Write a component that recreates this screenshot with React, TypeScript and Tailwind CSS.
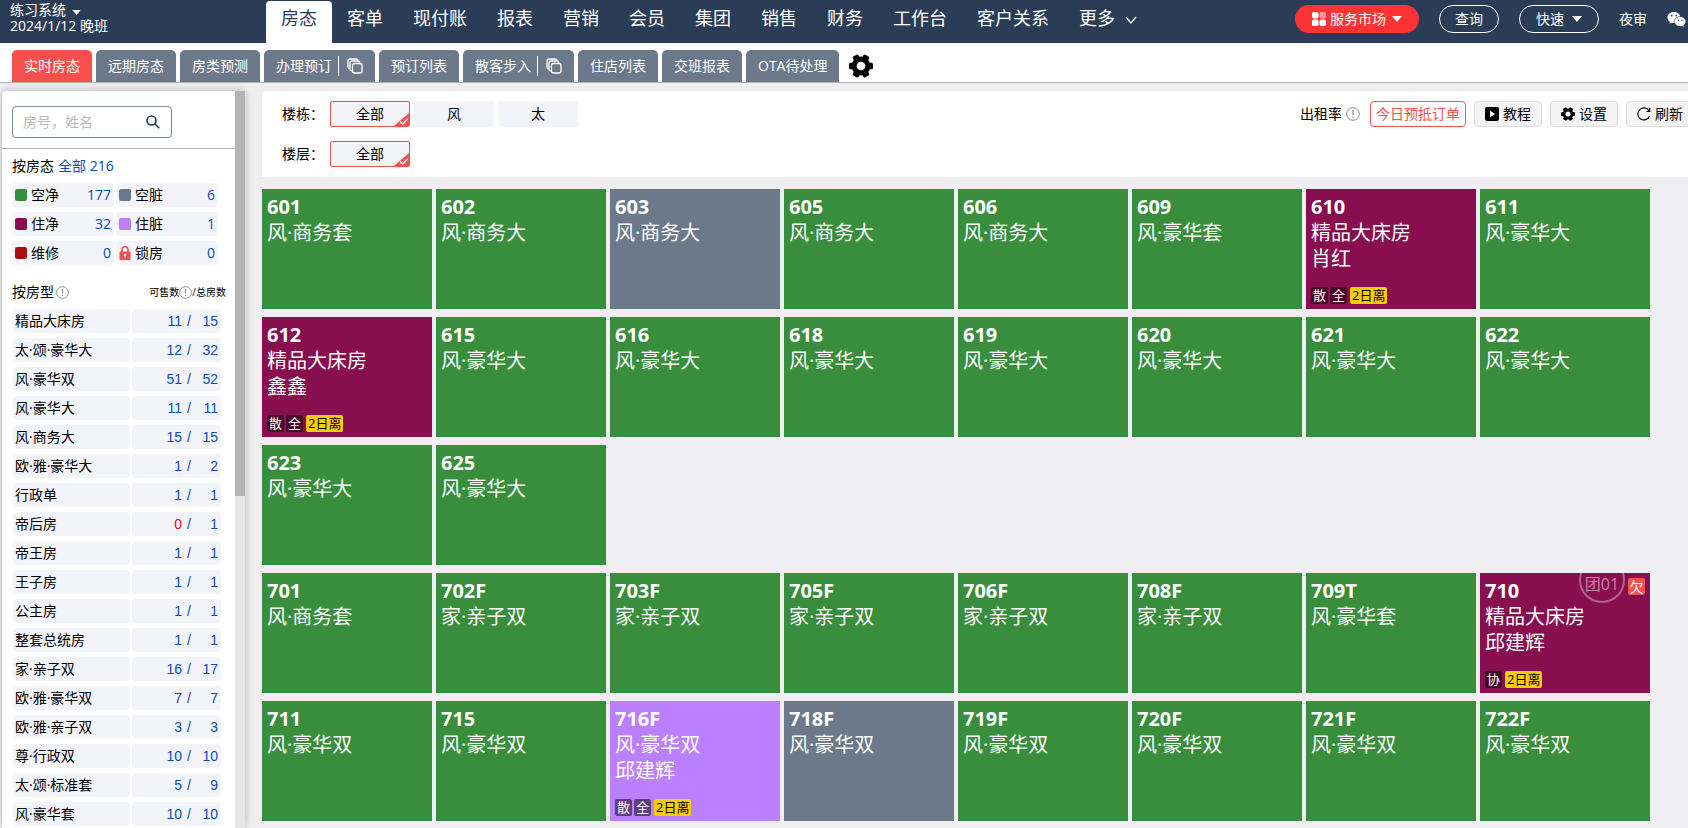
import React from "react";
import { FaWeixin } from "react-icons/fa";

type Status = "clean" | "dirty" | "occupied" | "occupiedDirty";

interface Room {
  no: string;
  type: string;
  status?: Status;
  guest?: string;
  tags?: string[];
  leave?: string;
  group?: string;
  owes?: boolean;
}

const NAV = ["房态", "客单", "现付账", "报表", "营销", "会员", "集团", "销售", "财务", "工作台", "客户关系"];

const TABS: { label: string; copy?: boolean }[] = [
  { label: "实时房态" },
  { label: "远期房态" },
  { label: "房类预测" },
  { label: "办理预订", copy: true },
  { label: "预订列表" },
  { label: "散客步入", copy: true },
  { label: "住店列表" },
  { label: "交班报表" },
  { label: "OTA待处理" },
];

const STATES = [
  { label: "空净", count: 177, color: "bg-[#388e3c]" },
  { label: "空脏", count: 6, color: "bg-[#6c798a]" },
  { label: "住净", count: 32, color: "bg-[#880e4f]" },
  { label: "住脏", count: 1, color: "bg-[#bb80ff]" },
  { label: "维修", count: 0, color: "bg-[#a81010]" },
  { label: "锁房", count: 0, color: "" },
];

const TYPES: [string, number, number][] = [
  ["精品大床房", 11, 15],
  ["太·颂·豪华大", 12, 32],
  ["风·豪华双", 51, 52],
  ["风·豪华大", 11, 11],
  ["风·商务大", 15, 15],
  ["欧·雅·豪华大", 1, 2],
  ["行政单", 1, 1],
  ["帝后房", 0, 1],
  ["帝王房", 1, 1],
  ["王子房", 1, 1],
  ["公主房", 1, 1],
  ["整套总统房", 1, 1],
  ["家·亲子双", 16, 17],
  ["欧·雅·豪华双", 7, 7],
  ["欧·雅·亲子双", 3, 3],
  ["尊·行政双", 10, 10],
  ["太·颂·标准套", 5, 9],
  ["风·豪华套", 10, 10],
];

const FLOORS: Room[][] = [
  [
    { no: "601", type: "风·商务套" },
    { no: "602", type: "风·商务大" },
    { no: "603", type: "风·商务大", status: "dirty" },
    { no: "605", type: "风·商务大" },
    { no: "606", type: "风·商务大" },
    { no: "609", type: "风·豪华套" },
    { no: "610", type: "精品大床房", status: "occupied", guest: "肖红", tags: ["散", "全"], leave: "2日离" },
    { no: "611", type: "风·豪华大" },
    { no: "612", type: "精品大床房", status: "occupied", guest: "鑫鑫", tags: ["散", "全"], leave: "2日离" },
    { no: "615", type: "风·豪华大" },
    { no: "616", type: "风·豪华大" },
    { no: "618", type: "风·豪华大" },
    { no: "619", type: "风·豪华大" },
    { no: "620", type: "风·豪华大" },
    { no: "621", type: "风·豪华大" },
    { no: "622", type: "风·豪华大" },
    { no: "623", type: "风·豪华大" },
    { no: "625", type: "风·豪华大" },
  ],
  [
    { no: "701", type: "风·商务套" },
    { no: "702F", type: "家·亲子双" },
    { no: "703F", type: "家·亲子双" },
    { no: "705F", type: "家·亲子双" },
    { no: "706F", type: "家·亲子双" },
    { no: "708F", type: "家·亲子双" },
    { no: "709T", type: "风·豪华套" },
    { no: "710", type: "精品大床房", status: "occupied", guest: "邱建辉", tags: ["协"], leave: "2日离", group: "团01", owes: true },
    { no: "711", type: "风·豪华双" },
    { no: "715", type: "风·豪华双" },
    { no: "716F", type: "风·豪华双", status: "occupiedDirty", guest: "邱建辉", tags: ["散", "全"], leave: "2日离" },
    { no: "718F", type: "风·豪华双", status: "dirty" },
    { no: "719F", type: "风·豪华双" },
    { no: "720F", type: "风·豪华双" },
    { no: "721F", type: "风·豪华双" },
    { no: "722F", type: "风·豪华双" },
  ],
];

const STATUS_BG: Record<Status, string> = {
  clean: "bg-[#388e3c]",
  dirty: "bg-[#6c798a]",
  occupied: "bg-[#880e4f]",
  occupiedDirty: "bg-[#bb80ff]",
};

function Caret({ className = "" }: { className?: string }) {
  return (
    <svg viewBox="0 0 10 6" className={className} fill="currentColor" aria-hidden="true">
      <path d="M0 0h10L5 6z" />
    </svg>
  );
}

function Gear({ className = "" }: { className?: string }) {
  return (
    <svg viewBox="0 0 22 22" className={className} fill="#000" aria-hidden="true">
      <rect x="8" y="0" width="6" height="22" rx="1.4" transform="rotate(-30 11 11)" />
      <rect x="8" y="0" width="6" height="22" rx="1.4" transform="rotate(30 11 11)" />
      <rect x="8" y="0" width="6" height="22" rx="1.4" transform="rotate(90 11 11)" />
      <circle cx="11" cy="11" r="8.6" />
      <circle cx="11" cy="11" r="4" fill="#fff" />
    </svg>
  );
}

function CopyIcon() {
  return (
    <svg viewBox="0 0 16 16" className="size-4" fill="none" stroke="currentColor" strokeWidth="1.3" aria-hidden="true">
      <path d="M2.5 11A2 2 0 0 1 1 9.200V3a2 2 0 0 1 2-2h6.200A2 2 0 0 1 11 2.500" />
      <path d="M4.700 13A2 2 0 0 1 3 11V5a2 2 0 0 1 2-2h6a2 2 0 0 1 2 1.700" />
      <rect x="5.500" y="5.500" width="9.500" height="9.500" rx="2" />
    </svg>
  );
}

function Info({ className = "" }: { className?: string }) {
  return (
    <svg viewBox="0 0 14 14" className={className} fill="none" stroke="#888" aria-hidden="true">
      <circle cx="7" cy="7" r="6.300" />
      <path d="M7 3v5.200M7 9.500v1.300" strokeWidth="1.200" />
    </svg>
  );
}

function Lock() {
  return (
    <svg viewBox="0 0 12 14" className="h-[14px] w-3" aria-hidden="true">
      <path d="M3 6V3.800a3 3 0 0 1 6 0V6" fill="none" stroke="#f5504e" strokeWidth="1.600" />
      <rect x="0.500" y="5.500" width="11" height="8.500" rx="1" fill="#f5504e" />
      <path d="M6 8v3.500" stroke="#fff" strokeWidth="1.300" />
      <circle cx="6" cy="8.700" r="1.200" fill="#fff" />
    </svg>
  );
}

function Option({ label, selected }: { label: string; selected?: boolean }) {
  return (
    <button
      type="button"
      className={
        "relative h-[26px] w-20 overflow-hidden rounded-xs bg-[#f3f4f9] text-sm text-black " +
        (selected ? "border border-[#f5504e]" : "")
      }
    >
      {label}
      {selected && (
        <svg viewBox="0 0 15 13" className="absolute right-0 bottom-0 h-[13px] w-[15px]" aria-hidden="true">
          <path d="M15 0v13H0z" fill="#f5504e" />
          <path d="M6 8.500l2.700 2.500 5-5" fill="none" stroke="#fff" strokeWidth="1.500" />
        </svg>
      )}
    </button>
  );
}

function ToolButton({ icon, label }: { icon: React.ReactNode; label: string }) {
  return (
    <button
      type="button"
      className="flex h-[26px] w-[68px] shrink-0 items-center justify-center gap-1 rounded-sm border border-[#dcdcdc] bg-[#f3f3f3] text-sm text-black"
    >
      {icon}
      {label}
    </button>
  );
}

function RoomCard({ room }: { room: Room }) {
  return (
    <article className={"relative flex h-[120px] flex-col overflow-hidden p-[5px] pt-1 text-white " + STATUS_BG[room.status ?? "clean"]}>
      <h3 className="text-xl leading-[27px] font-bold">{room.no}</h3>
      <p className="text-xl leading-[26px]">{room.type}</p>
      {room.guest && <p className="text-xl leading-[26px]">{room.guest}</p>}
      {room.tags && (
        <div className="mt-auto flex gap-[2px] text-[13px] leading-[17px]">
          {room.tags.map((t) => (
            <span key={t} className="size-[17px] rounded-xs bg-black/50 text-center">
              {t}
            </span>
          ))}
          <span className="ml-px rounded-xs bg-[#ffcc00] px-[2px] text-black">{room.leave}</span>
        </div>
      )}
      {room.group && (
        <>
          <span className="absolute -top-4 right-[25px] size-[46px] rounded-full border-2 border-white/35" />
          <span className="absolute top-0 right-[25px] w-[46px] text-center text-base leading-[22px] text-white/50">{room.group}</span>
        </>
      )}
      {room.owes && (
        <span className="absolute top-[5px] right-[5px] size-[17px] rounded-xs bg-[#f5504e] text-center text-sm leading-[17px]">欠</span>
      )}
    </article>
  );
}

export default function App() {
  return (
    <div className="flex h-screen flex-col overflow-hidden bg-[#efeff1] font-['Open_Sans','Noto_Sans_CJK_SC',sans-serif] text-sm text-black">
      <header className="flex h-[43px] shrink-0 bg-[#2b3d56] text-white">
        <div className="w-[266px] shrink-0 pt-[2px] pl-[10px] text-sm leading-4">
          <button type="button" className="flex items-center gap-[6px]">
            练习系统
            <Caret className="mt-1 h-[5px] w-[9px]" />
          </button>
          <p>2024/1/12 晚班</p>
        </div>
        <nav className="flex shrink-0 pt-px text-lg">
          {NAV.map((n, i) => (
            <a
              key={n}
              href={"#nav-" + i}
              className={"flex items-center px-[15px] pb-2 " + (i === 0 ? "rounded-t-sm bg-white text-[#2b3d56]" : "")}
            >
              {n}
            </a>
          ))}
          <button type="button" className="flex items-center gap-[10px] px-[15px] pb-2">
            更多
            <svg viewBox="0 0 12 8" className="mt-1 h-2 w-3" fill="none" stroke="currentColor" strokeWidth="1.200" aria-hidden="true">
              <path d="M1 1l5 6 5-6" />
            </svg>
          </button>
        </nav>
        <div className="mr-[2px] ml-auto flex shrink-0 items-start gap-5 pt-[5px]">
          <button type="button" className="flex h-7 w-[124px] items-center justify-center gap-1 rounded-full bg-[#ff3333]">
            <svg viewBox="0 0 14 14" className="size-[14px]" fill="#fff" aria-hidden="true">
              <rect width="6.500" height="6.500" rx="1.800" />
              <rect x="7.500" width="6.500" height="6.500" rx="1.800" opacity="0.5" />
              <rect y="7.500" width="6.500" height="6.500" rx="1.800" />
              <rect x="7.500" y="7.500" width="6.500" height="6.500" rx="1.800" />
            </svg>
            服务市场
            <Caret className="ml-[2px] h-[6px] w-[10px]" />
          </button>
          <button type="button" className="h-7 w-[60px] rounded-full border border-white">查询</button>
          <button type="button" className="flex h-7 w-20 items-center justify-center gap-2 rounded-full border border-white">
            快速
            <Caret className="h-[6px] w-[10px]" />
          </button>
          <button type="button" className="h-7">夜审</button>
          <button type="button" aria-label="微信" className="flex h-7 items-center">
            <FaWeixin className="size-[19px]" />
          </button>
        </div>
      </header>

      <nav className="flex h-10 shrink-0 items-end gap-1 border-b border-[#b4b4b4] bg-white pl-3 text-white">
        {TABS.map((t, i) => (
          <div key={t.label} className={"flex h-8 shrink-0 items-center rounded-t-[5px] px-3 " + (i === 0 ? "bg-[#f5504e]" : "bg-[#6c798a]")}>
            <a href={"#tab-" + i}>{t.label}</a>
            {t.copy && (
              <button type="button" aria-label={t.label + "新窗口"} className="ml-[6px] flex h-5 items-center border-l border-white pl-2">
                <CopyIcon />
              </button>
            )}
          </div>
        ))}
        <button type="button" aria-label="设置菜单" className="ml-[6px] flex h-8 items-center">
          <Gear className="size-6" />
        </button>
      </nav>

      <div className="flex min-h-0 flex-1 pt-2">
        <aside className="ml-[2px] flex w-[243px] shrink-0 rounded-tl-sm bg-white shadow-[0_0_8px_rgba(0,0,0,0.25)]">
          <div className="min-w-0 flex-1 overflow-hidden">
            <div className="border-b border-[#b4b4b4] px-[10px] pt-[15px] pb-[10px]">
              <label className="flex h-8 w-[160px] items-center rounded-sm border border-[#73879d] pr-[11px] pl-[10px]">
                <input type="text" aria-label="房号，姓名" placeholder="房号，姓名" className="min-w-0 flex-1 text-sm outline-none placeholder:text-[#b9b9b9]" />
                <svg viewBox="0 0 14 14" className="size-[14px]" fill="none" stroke="#1f3b5c" strokeWidth="1.600" aria-hidden="true">
                  <circle cx="5.500" cy="5.500" r="4.500" />
                  <path d="M8.800 8.800L13.300 13.300" />
                </svg>
              </label>
            </div>
            <div className="flex h-[34px] items-center gap-1 pl-[10px]">
              <h2>按房态</h2>
              <a href="#all" className="text-[#0b4bc0]">全部 216</a>
            </div>
            <ul className="grid w-[216px] grid-cols-2 gap-x-[2px] gap-y-[5px] pl-[10px]">
              {STATES.map((s) => (
                <li key={s.label} className="flex h-6 items-center gap-1 rounded-sm bg-[#f3f4f9] px-[3px]">
                  {s.color ? <span className={"size-3 rounded-xs " + s.color} /> : <Lock />}
                  <span>{s.label}</span>
                  <span className="ml-auto text-[#0b4bc0]">{s.count}</span>
                </li>
              ))}
            </ul>
            <div className="mt-[10px] flex h-[34px] items-center pr-[9px] pl-[10px]">
              <h2>按房型</h2>
              <Info className="ml-[2px] size-[13px]" />
              <span className="ml-auto flex items-center text-[10px]">
                可售数
                <Info className="size-[13px]" />
                /总房数
              </span>
            </div>
            <table className="ml-[9px] border-separate border-spacing-x-[2px] border-spacing-y-0">
              <tbody>
                {TYPES.map(([name, free, total]) => (
                  <tr key={name}>
                    <td className="h-[29px] p-0 pb-[5px] align-top">
                      <div className="h-6 w-[117px] rounded-sm bg-[#f3f4f9] pl-[2px] leading-6">{name}</div>
                    </td>
                    <td className="h-[29px] p-0 pb-[5px] align-top">
                      <div className="flex h-6 w-[89px] justify-end rounded-sm bg-[#f3f4f9] pr-[3px] font-['Liberation_Sans',sans-serif] leading-6 text-[#0b4bc0]">
                        <span className={free === 0 ? "text-[#ff0000]" : ""}>{free}</span>
                        <span className="ml-[5px]">/</span>
                        <span className="w-[27px] text-right">{total}</span>
                      </div>
                    </td>
                  </tr>
                ))}
              </tbody>
            </table>
          </div>
          <div className="w-[10px] bg-[#e5e5e5]">
            <div className="h-[55%] bg-[#b4b4b4]" />
          </div>
        </aside>

        <main className="ml-[17px] min-w-0 flex-1 overflow-hidden">
          <section className="flex justify-between rounded-tl-sm bg-white pt-[10px] pb-[10px] pl-5">
            <div className="flex flex-col gap-[14px]">
              <div className="flex items-center gap-1">
                <span className="w-11 shrink-0">楼栋：</span>
                <Option label="全部" selected />
                <Option label="风" />
                <Option label="太" />
              </div>
              <div className="flex items-center gap-1">
                <span className="w-11 shrink-0">楼层：</span>
                <Option label="全部" selected />
              </div>
            </div>
            <div className="-mr-[6px] flex shrink-0 items-start gap-2">
              <span className="mr-[2px] flex h-[26px] items-center gap-1">
                出租率
                <Info className="size-[14px]" />
              </span>
              <button type="button" className="h-[26px] w-24 rounded-sm border border-[#f5504e] bg-white text-sm text-[#f5504e]">今日预抵订单</button>
              <ToolButton
                label="教程"
                icon={
                  <svg viewBox="0 0 14 14" className="size-[14px]" aria-hidden="true">
                    <rect width="14" height="14" rx="2" />
                    <path d="M5 3.500v7l5-3.500z" fill="#fff" />
                  </svg>
                }
              />
              <ToolButton label="设置" icon={<Gear className="size-[14px]" />} />
              <ToolButton
                label="刷新"
                icon={
                  <svg viewBox="0 0 14 14" className="size-[14px]" fill="none" stroke="currentColor" strokeWidth="1.200" aria-hidden="true">
                    <path d="M12.500 9A6 6 0 1 1 12 3.800M12.700 1v3.500H9.500" />
                  </svg>
                }
              />
            </div>
          </section>

          <div className="mt-3 flex flex-col gap-2">
            {FLOORS.map((rooms, i) => (
              <section key={i} className="grid grid-cols-[repeat(auto-fill,170px)] gap-x-1 gap-y-2">
                {rooms.map((r) => (
                  <RoomCard key={r.no} room={r} />
                ))}
              </section>
            ))}
          </div>
        </main>
      </div>
    </div>
  );
}
